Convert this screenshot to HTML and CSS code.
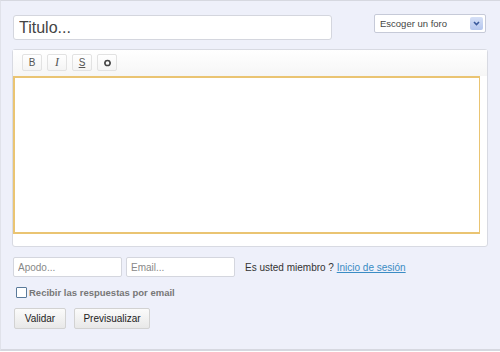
FILE: index.html
```html
<!DOCTYPE html>
<html>
<head>
    <meta name="viewport" content="width=device-width, initial-scale=1.0">
    <title>Nuevo mensaje</title>
    <link rel="stylesheet" href="styles.css">
</head>
<body>
    <div class="form">
        <div class="top">
            <input class="title" type="text" placeholder="Titulo...">
            <div class="select">
                <span>Escoger un foro</span>
                <span class="arrow">
                    <svg width="7" height="5" viewBox="0 0 7 5"><path d="M1 1 L3.5 3.5 L6 1" fill="none" stroke="#3a5a9c" stroke-width="1.6"/></svg>
                </span>
            </div>
        </div>

        <div class="editor">
            <div class="toolbar">
                <button class="tool">B</button>
                <button class="tool italic">I</button>
                <button class="tool strike">S</button>
                <button class="tool">
                    <svg width="9" height="8" viewBox="0 0 9 8"><circle cx="4.5" cy="4" r="2.6" fill="none" stroke="#444" stroke-width="1.5"/><path d="M1 4 H2.5 M6.5 4 H8" stroke="#444" stroke-width="1.2"/></svg>
                </button>
            </div>
            <div class="area-wrap">
                <div class="area"></div>
            </div>
            <div class="grip"></div>
        </div>

        <div class="row">
            <input class="small" type="text" placeholder="Apodo...">
            <input class="small" type="text" placeholder="Email...">
            <span class="member">Es usted miembro ? <a href="#">Inicio de sesión</a></span>
        </div>

        <label class="check"><span class="box"></span>Recibir las respuestas por email</label>

        <div class="buttons">
            <button class="btn validar">Validar</button>
            <button class="btn preview">Previsualizar</button>
        </div>
    </div>
</body>
</html>
```

FILE: styles.css
```css
body {
    margin: 0;
    font-family: "Liberation Sans", Arial, sans-serif;
    background: #fff;
}
.form {
    width: 500px;
    height: 351px;
    box-sizing: border-box;
    background: #eef0fa;
    border-top: 1px solid #d6d8e0;
    border-left: 1px solid #e0e2ea;
    border-bottom: 2px solid #d6d8e0;
    padding: 14px 0 0 11px;
}
.top {
    display: flex;
    align-items: flex-start;
}
.title {
    width: 319px;
    height: 25px;
    box-sizing: border-box;
    margin: 0 0 0 1px;
    border: 1px solid #d4d6de;
    border-radius: 3px;
    padding: 0 5px;
    font-family: inherit;
    font-size: 16px;
    color: #444;
    background: #fff;
}
.title::placeholder {
    color: #444;
}
.select {
    margin-left: 42px;
    margin-top: -1px;
    width: 112px;
    height: 19px;
    box-sizing: border-box;
    border: 1px solid #c6cad8;
    border-radius: 2px;
    background: #fff;
    display: flex;
    align-items: center;
    justify-content: space-between;
    padding: 0 2px 0 5px;
    font-size: 9.5px;
    color: #444;
}
.arrow {
    width: 13px;
    height: 13px;
    background: linear-gradient(#d6e0f6, #b4c6ee);
    border-radius: 2px;
    display: flex;
    align-items: center;
    justify-content: center;
}
.editor {
    margin-top: 9px;
    width: 476px;
    height: 198px;
    box-sizing: border-box;
    border: 1px solid #d8dae2;
    border-radius: 3px;
    background: #fff;
    display: flex;
    flex-direction: column;
}
.toolbar {
    height: 26px;
    box-sizing: border-box;
    padding: 4px 0 0 9px;
    display: flex;
    gap: 5px;
    background: linear-gradient(#fff, #f6f6f6);
}
.tool {
    width: 20px;
    height: 17px;
    padding: 0;
    border: 1px solid #e2e2e2;
    border-radius: 2px;
    background: linear-gradient(#fff, #f4f4f4);
    font-family: inherit;
    font-size: 10px;
    color: #555;
    display: flex;
    align-items: center;
    justify-content: center;
}
.italic {
    font-family: "Liberation Serif", serif;
    font-style: italic;
    font-size: 12px;
}
.strike {
    text-decoration: underline;
}
.area-wrap {
    flex: 1;
    padding-right: 7px;
}
.area {
    height: 158px;
    box-sizing: border-box;
    border: 2px solid #eac472;
    border-right-width: 1px;
    background: #fff;
}
.grip {
    height: 11px;
}
.row {
    margin-top: 10px;
    display: flex;
    align-items: center;
}
.small {
    width: 109px;
    height: 20px;
    box-sizing: border-box;
    margin: 0 4px 0 1px;
    border: 1px solid #d4d6de;
    border-radius: 2px;
    padding: 0 4px;
    font-family: inherit;
    font-size: 10px;
    background: #fff;
}
.small + .small {
    margin: 0 10px 0 0;
}
.small::placeholder {
    color: #888;
}
.member {
    font-size: 10px;
    color: #333;
}
.member a {
    color: #3a8cc4;
}
.check {
    margin: 10px 0 0 4px;
    display: flex;
    align-items: center;
    font-size: 9.5px;
    font-weight: bold;
    color: #777;
}
.box {
    width: 9px;
    height: 9px;
    border: 1px solid #5a7a9a;
    border-radius: 1px;
    background: #fff;
    margin-right: 2px;
}
.buttons {
    margin: 10px 0 0 2px;
    display: flex;
    gap: 8px;
}
.btn {
    height: 21px;
    padding: 0;
    border: 1px solid #d2d2d2;
    border-radius: 2px;
    background: linear-gradient(#fbfbfb, #e8e8e8);
    font-family: inherit;
    font-size: 10px;
    color: #222;
}
.validar {
    width: 52px;
}
.preview {
    width: 76px;
}
```
